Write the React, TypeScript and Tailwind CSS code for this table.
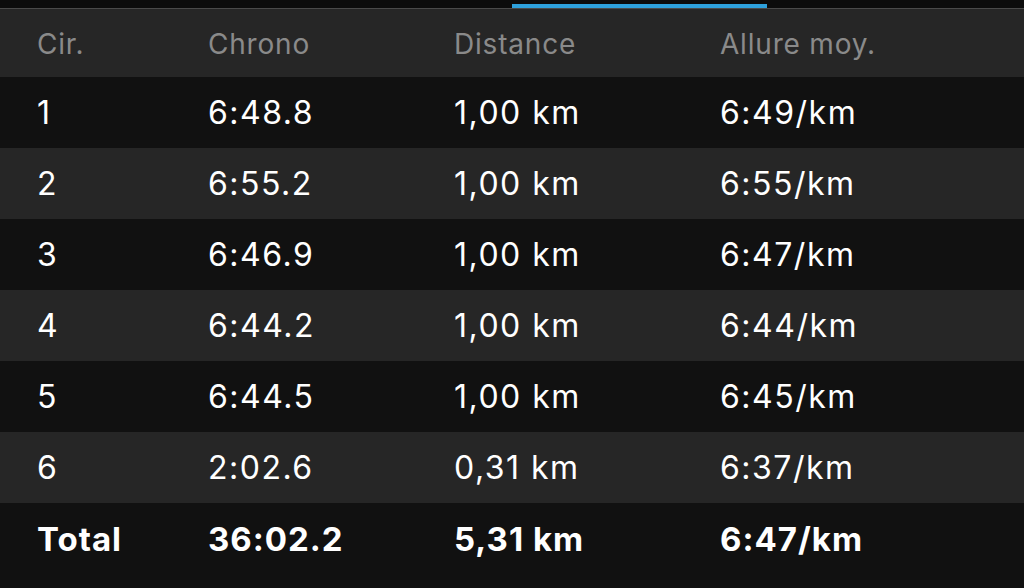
import React from "react";

const rows = [
  ["1", "6:48.8", "1,00 km", "6:49/km"],
  ["2", "6:55.2", "1,00 km", "6:55/km"],
  ["3", "6:46.9", "1,00 km", "6:47/km"],
  ["4", "6:44.2", "1,00 km", "6:44/km"],
  ["5", "6:44.5", "1,00 km", "6:45/km"],
  ["6", "2:02.6", "0,31 km", "6:37/km"],
];

export default function App() {
  return (
    <div className="w-[1024px] h-[588px] bg-[#111111] flex flex-col overflow-hidden" style={{ fontFamily: "Inter, 'Liberation Sans', sans-serif" }}>
      <div className="h-[8px] bg-[#0c0c0c] flex items-end">
        <div className="w-[512px]" />
        <div className="w-[255px] h-[4px] bg-[#2ea1dc]" />
      </div>
      <div className="h-[1px] bg-[#4a4a4a]" />
      <div className="h-[68px] bg-[#262626] grid grid-cols-[171px_246px_266px_1fr] items-center pl-[37px] pt-[2px] text-[28px] tracking-[0.8px] text-[#8a8a8a]">
        <div>Cir.</div>
        <div>Chrono</div>
        <div>Distance</div>
        <div>Allure moy.</div>
      </div>
      {rows.map((r, i) => (
        <div
          key={i}
          className={`h-[71px] grid grid-cols-[171px_246px_266px_1fr] items-center pl-[37px] text-[32px] tracking-[1.5px] text-white ${i % 2 === 0 ? "bg-[#111111]" : "bg-[#262626]"}`}
        >
          {r.map((c, j) => (
            <div key={j}>{c}</div>
          ))}
        </div>
      ))}
      <div className="h-[85px] grid grid-cols-[171px_246px_266px_1fr] items-center pl-[37px] pb-[12px] text-[33px] tracking-[1px] font-bold text-white bg-[#111111]">
        <div>Total</div>
        <div>36:02.2</div>
        <div>5,31 km</div>
        <div>6:47/km</div>
      </div>
    </div>
  );
}
